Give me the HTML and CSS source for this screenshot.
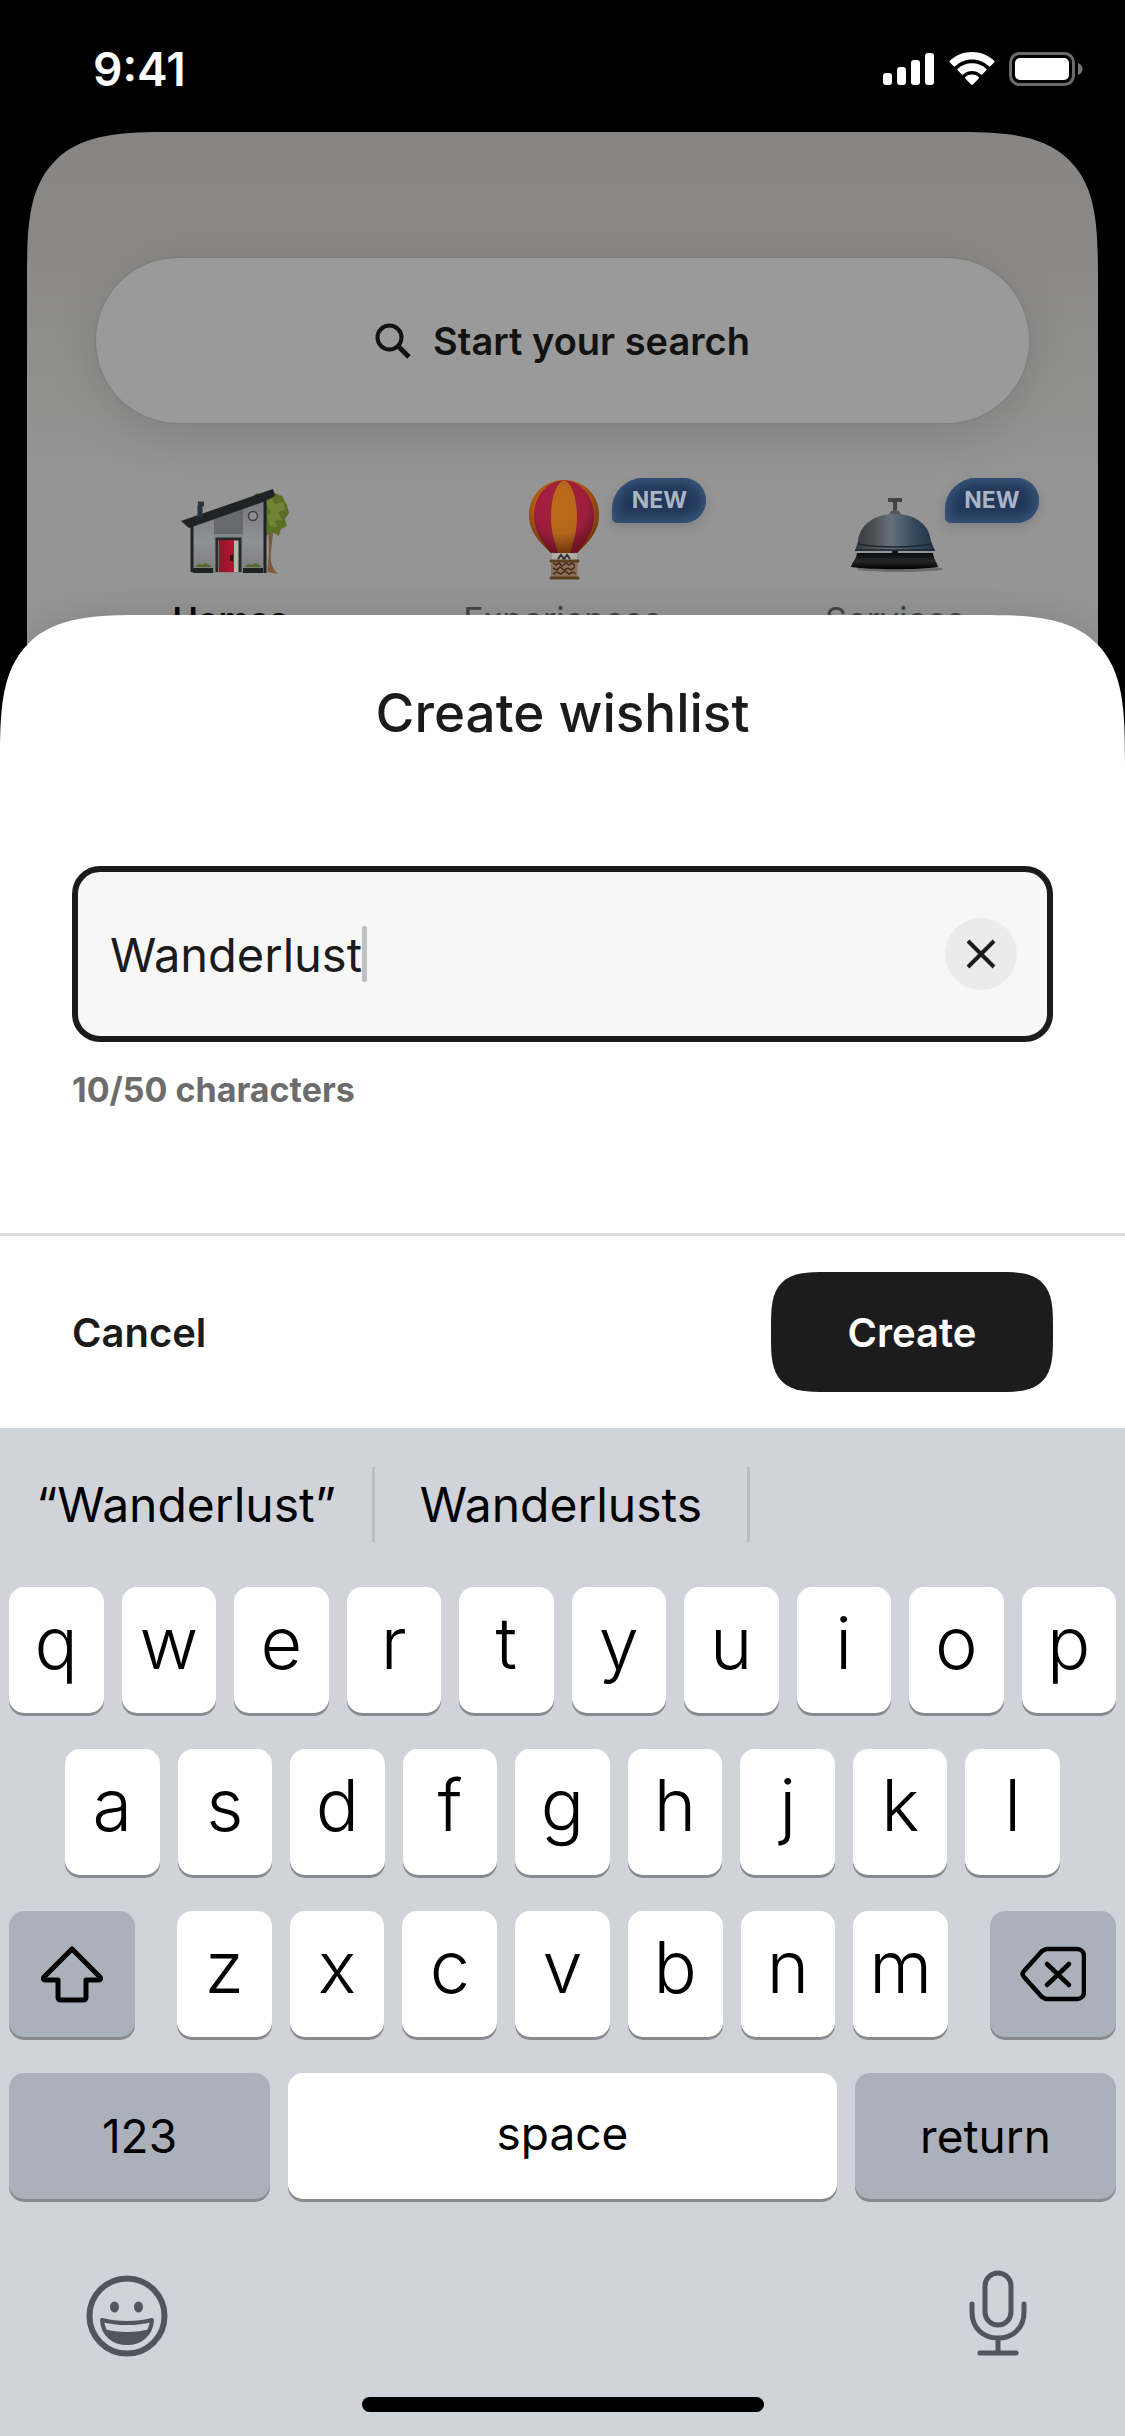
FILE: index.html
```html
<!DOCTYPE html>
<html lang="en">
<head>
<meta charset="utf-8">
<meta name="viewport" content="width=device-width, initial-scale=1">
<title>Create wishlist</title>
<link rel="stylesheet" href="styles.css">
</head>
<body>
<header class="status">
  <time class="status-time">9:41</time>
  <div class="status-icons">
    <svg width="52" height="34" viewBox="0 0 52 34" fill="#fff" aria-hidden="true"><rect x="0" y="21" width="9" height="12" rx="3"/><rect x="14" y="15" width="9" height="18" rx="3"/><rect x="28" y="8" width="9" height="25" rx="3"/><rect x="42" y="1" width="9" height="32" rx="3"/></svg>
    <svg width="46" height="34" viewBox="0 0 46 34" fill="#fff" aria-hidden="true"><path d="M23 0C31.500 0 39.300 3.200 45 8.600c.7.600.7 1.400.1 2l-3.500 3.500c-.6.600-1.400.6-2 0C35.200 10 29.400 7.500 23 7.500S10.800 10 6.400 14.100c-.6.600-1.400.6-2 0L.9 10.600c-.6-.6-.6-1.400.1-2C6.700 3.200 14.500 0 23 0z"/><path d="M23 11.200c5.400 0 10.300 2 14 5.400.7.600.7 1.400.1 2l-3.600 3.600c-.6.600-1.300.6-2 .1-2.300-2-5.300-3.200-8.500-3.200s-6.200 1.200-8.500 3.200c-.7.500-1.400.5-2-.1l-3.600-3.600c-.6-.6-.6-1.400.1-2 3.700-3.400 8.600-5.400 14-5.400z"/><path d="M23 22.600c2.500 0 4.700.8 6.400 2.200.6.500.6 1.300.1 1.900l-5.600 5.700c-.5.500-1.300.5-1.800 0l-5.600-5.700c-.5-.6-.5-1.400.1-1.900 1.700-1.400 3.900-2.200 6.400-2.200z"/></svg>
    <svg width="74" height="34" viewBox="0 0 74 34" aria-hidden="true"><rect x="1.500" y="1.500" width="63" height="31" rx="9" fill="none" stroke="#6a6a6a" stroke-width="3"/><rect x="6" y="6" width="54" height="22" rx="5" fill="#fff"/><path d="M69 11c3 1 4.500 3.500 4.500 6S72 22 69 23z" fill="#757575"/></svg>
  </div>
</header>

<section class="explore">
  <button class="search" type="button">
    <svg width="36" height="36" viewBox="0 0 36 36" fill="none" stroke="#121212" stroke-width="4" aria-hidden="true"><circle cx="14.500" cy="14.500" r="12"/><path d="M23 23l11 11" stroke-width="5"/></svg>
    Start your search
  </button>
  <nav class="tabs">
    <a class="tab tab-current" href="#homes">
      <svg class="tab-art" width="112" height="104" viewBox="-7 -1 112 104" overflow="visible" aria-hidden="true">
        <defs>
          <linearGradient id="wall" x1="0" y1="0" x2="0" y2="1"><stop offset="0" stop-color="#77777a"/><stop offset=".6" stop-color="#909194"/><stop offset="1" stop-color="#7c7c7e"/></linearGradient>
          <linearGradient id="door" x1="0" y1="0" x2="1" y2="0"><stop offset="0" stop-color="#96142c"/><stop offset="1" stop-color="#b2152f"/></linearGradient>
        </defs>
        <path d="M86 45c3 18 2 36 0 48l11 2c-6-6-8-12-7-22l3-28z" fill="#7c5b3a"/>
        <path d="M70 18l6-4 8 3 8-4 9 4 5 9 2 8-4 6 2 7-6 3-2 7-7-4-7 5-3-8z" fill="#5c6f27"/>
        <path d="M84 22l7-2 3 5 8-2 2 8-7 2 4 8-7 1 2 6-7-1-3-10 4-3z" fill="#708535"/>
        <path d="M11 44L84 17v77H11z" fill="url(#wall)"/>
        <path d="M33 38l29-12v68H33z" fill="#68696c"/><path d="M33 55h29v39H33z" fill="#848588"/>
        <path d="M11 46v47M84 20v74" stroke="#202326" stroke-width="3"/>
        <path d="M0 42L92 10l2 7-12 6L8 49z" fill="#1f2324"/>
        <path d="M19 38V26M17 25h6" stroke="#27363a" stroke-width="5"/>
        <circle cx="72" cy="37" r="4.500" fill="#8f8f91" stroke="#3e4042" stroke-width="1.500"/>
        <path d="M36 93V60h23v33" fill="#b9b7ad" stroke="#27292a" stroke-width="3"/>
        <path d="M38 61h15v32H38z" fill="url(#door)"/><path d="M49 76h3v6h-3z" fill="#2c1218"/>
        <path d="M12 89h20v5H12zM62 89h20v5H62z" fill="#202420"/><path d="M14 88l3-3 4 1 4-2 6 4zM64 88l3-3 4 1 4-2 6 4z" fill="#526a2b"/>
      </svg>
      <span>Homes</span>
    </a>
    <a class="tab" href="#experiences">
      <svg class="tab-art" width="112" height="104" viewBox="-2 -1 112 104" aria-hidden="true">
        <defs><radialGradient id="shade" cx=".45" cy=".35" r=".65"><stop offset="0" stop-color="#000" stop-opacity="0"/><stop offset=".6" stop-color="#000" stop-opacity=".05"/><stop offset="1" stop-color="#300" stop-opacity=".5"/></radialGradient></defs>
        <path d="M56 1c20 0 35 15 35 35 0 15-8 25-22 38H43C29 61 21 51 21 36 21 16 36 1 56 1z" fill="#b65f16"/>
        <path d="M56 1C37 3 26 19 26 37c0 15 8 25 17 37h26c9-12 17-22 17-37C86 19 75 3 56 1z" fill="#a5203f"/>
        <path d="M56 1c-8 3-13 18-13 37 0 15 4 26 7 36h12c3-10 7-21 7-36C69 19 64 4 56 1z" fill="#bd6b1a"/>
        <path d="M56 1c20 0 35 15 35 35 0 15-8 25-22 38H43C29 61 21 51 21 36 21 16 36 1 56 1z" fill="url(#shade)"/>
        <path d="M44 74h25v9H44z" fill="#b0aba4"/><path d="M50 80l3-4 3 4 3-4 3 4" stroke="#343038" stroke-width="2" fill="none"/>
        <path d="M43 81h27l-1 18H43z" fill="#8c7056"/>
        <path d="M45 84l3 2 3-2 3 3 4-3 3 2 3-2 3 3M45 89l4 2 3-3 4 3 4-2 3 2 4-3M45 95l4-2 4 2 4-3 4 3 4-2 3 2" stroke="#402b20" stroke-width="1.500" fill="none"/>
        <path d="M43 82h27M43 99h27" stroke="#59401e" stroke-width="3" stroke-linecap="round"/>
      </svg>
      <span>Experiences</span>
      <strong class="badge">NEW</strong>
    </a>
    <a class="tab" href="#services">
      <svg class="tab-art" width="112" height="104" viewBox="1 -1 112 104" aria-hidden="true">
        <defs>
          <linearGradient id="dome" x1="0" y1="0" x2="1" y2="0"><stop offset="0" stop-color="#343b42"/><stop offset=".2" stop-color="#4a4b4c"/><stop offset=".45" stop-color="#65717b"/><stop offset=".75" stop-color="#34495d"/><stop offset="1" stop-color="#233140"/></linearGradient>
          <linearGradient id="base" x1="0" y1="0" x2="0" y2="1"><stop offset="0" stop-color="#08090a"/><stop offset=".5" stop-color="#27282a"/><stop offset="1" stop-color="#000"/></linearGradient>
        </defs>
        <ellipse cx="62" cy="90" rx="43" ry="3" fill="#6d6d6d"/>
        <path d="M50 21h14M57 22v10" stroke="#424548" stroke-width="4"/><path d="M51 37c0-8 12-8 12 0z" fill="#54585c"/>
        <path d="M20 62c2-17 17-27 37-27s34 10 36 27l4 10H17z" fill="url(#dome)"/>
        <path d="M20 65c20 4 52 4 73 0M17 71h80" stroke="#1d2731" stroke-width="1.500" fill="none"/>
        <path d="M19 74h76c1 7 4 9 5 14-20 3-67 3-87 0 1-5 5-7 6-14z" fill="url(#base)"/><path d="M54 72h6v3h-6z" fill="#101214"/>
      </svg>
      <span>Services</span>
      <strong class="badge">NEW</strong>
    </a>
  </nav>
</section>

<main class="sheet">
  <h1 class="sheet-title">Create wishlist</h1>
  <form class="form">
    <div class="fields">
      <div class="field">
        <input class="field-input" type="text" value="Wanderlust" maxlength="50" size="9" aria-label="Wishlist name" aria-describedby="count">
        <span class="caret"></span>
        <button class="clear" type="button" aria-label="Clear text"><svg width="32" height="32" viewBox="0 0 32 32" fill="none" stroke="#1b1b1b" stroke-width="4" aria-hidden="true"><path d="M3 3l26 26M29 3L3 29"/></svg></button>
      </div>
      <p class="count" id="count">10/50 characters</p>
    </div>
    <div class="actions">
      <button class="cancel" type="button">Cancel</button>
      <button class="create" type="submit">Create</button>
    </div>
  </form>
</main>

<section class="keyboard" aria-label="Keyboard">
  <div class="suggestions">
    <button type="button" class="suggestion">“Wanderlust”</button>
    <button type="button" class="suggestion">Wanderlusts</button>
    <span class="suggestion"></span>
  </div>
  <div class="keys">
    <div class="row">
      <button class="key">q</button><button class="key">w</button><button class="key">e</button><button class="key">r</button><button class="key">t</button><button class="key">y</button><button class="key">u</button><button class="key">i</button><button class="key">o</button><button class="key">p</button>
    </div>
    <div class="row row-home">
      <button class="key">a</button><button class="key">s</button><button class="key">d</button><button class="key">f</button><button class="key">g</button><button class="key">h</button><button class="key">j</button><button class="key">k</button><button class="key">l</button>
    </div>
    <div class="row row-shift">
      <button class="key key-dark" aria-label="Shift"><svg width="64" height="58" viewBox="0 0 64 58" fill="none" stroke="#000" stroke-width="5" stroke-linejoin="round" aria-hidden="true"><path d="M32 4L60 32c1 1 1 3-1 3H46v17c0 2-1 3-3 3H21c-2 0-3-1-3-3V35H5c-2 0-2-2-1-3z"/></svg></button>
      <div class="row row-letters"><button class="key">z</button><button class="key">x</button><button class="key">c</button><button class="key">v</button><button class="key">b</button><button class="key">n</button><button class="key">m</button></div>
      <button class="key key-dark" aria-label="Delete"><svg width="66" height="56" viewBox="0 0 66 56" fill="none" stroke="#000" stroke-width="4.500" stroke-linecap="round" stroke-linejoin="round" aria-hidden="true"><path d="M27 3h30c4 0 7 3 7 7v36c0 4-3 7-7 7H27c-2 0-3-1-5-2L4 31c-2-2-2-4 0-6L22 5c2-1 3-2 5-2z"/><path d="M27 18l22 21M49 18L27 39"/></svg></button>
    </div>
    <div class="row row-space">
      <button class="key key-dark key-word">123</button>
      <button class="key key-word">space</button>
      <button class="key key-dark key-word">return</button>
    </div>
  </div>
  <div class="tools">
    <button class="tool" aria-label="Emoji"><svg width="82" height="88" viewBox="0 0 82 88" fill="none" stroke="#50555e" aria-hidden="true"><circle cx="41" cy="47" r="37.500" stroke-width="6"/><ellipse cx="28.500" cy="38" rx="4.500" ry="5.500" fill="#50555e" stroke="none"/><ellipse cx="52.500" cy="38" rx="4.500" ry="5.500" fill="#50555e" stroke="none"/><path d="M16 51c15 4 35 4 50 0-1 15-12 23-25 23S17 66 16 51z" stroke-width="4" stroke-linejoin="round"/><path d="M18 60c14 4 32 4 46 0-3 10-12 14-23 14s-20-4-23-14z" fill="#50555e" stroke="none"/></svg></button>
    <button class="tool" aria-label="Dictate"><svg width="58" height="88" viewBox="0 0 58 88" fill="none" stroke="#50555e" stroke-width="5" stroke-linecap="round" aria-hidden="true"><rect x="16" y="4" width="26" height="52" rx="13"/><path d="M3 35v8c0 16 11 26 26 26s26-10 26-26v-8M29 69v14"/><path d="M11 84h36"/></svg></button>
  </div>
  <div class="home-bar"></div>
</section>
</body>
</html>
```
FILE: styles.css
```css
* {
  box-sizing: border-box;
}

body {
  margin: 0;
  background: #000;
  color: #1b1b1b;
  font-family: Inter, "Liberation Sans", sans-serif;
  font-size: 40px;
}

button {
  margin: 0;
  padding: 0;
  border: 0;
  background: none;
  color: inherit;
  font: inherit;
}

svg {
  display: block;
  flex: none;
}

.status {
  display: flex;
  align-items: center;
  justify-content: space-between;
  height: 132px;
  padding: 6px 42px 0 93px;
  color: #fff;
}

.status-time {
  font-size: 46px;
  font-weight: 600;
}

.status-icons {
  display: flex;
  gap: 14px;
}

.explore {
  margin: 0 27px;
  padding: 126px 37px 120px;
  border-radius: 100px 100px 0 0;
  background: linear-gradient(#868583, #8a8986 126px, #959595 340px, #959595);
}

.search {
  display: flex;
  align-items: center;
  justify-content: center;
  gap: 22px;
  width: calc(100% - 64px);
  height: 165px;
  margin: 0 32px;
  border-radius: 82px;
  background: #9a9a9a;
  box-shadow: 0 12px 48px rgba(0, 0, 0, .13), 0 0 2px rgba(0, 0, 0, .2);
  color: #121212;
  font-size: 38px;
  font-weight: 600;
}

.tabs {
  display: grid;
  grid-template-columns: repeat(3, 1fr);
  margin-top: 55px;
}

.tab {
  position: relative;
  display: flex;
  flex-direction: column;
  align-items: center;
  gap: 16px;
  color: #454545;
  font-size: 34px;
  line-height: 44px;
  text-decoration: none;
}

.tab-current {
  color: #0b0b0b;
  font-weight: 600;
}

.badge {
  position: absolute;
  top: 0;
  left: calc(50% + 50px);
  width: 94px;
  height: 45px;
  border-radius: 32px 23px 23px 6px;
  background: #23385b;
  box-shadow: inset 0 0 12px 4px #39577b, 0 4px 12px rgba(0, 0, 0, .15);
  color: #a9b4c4;
  font-size: 23px;
  font-weight: 700;
  line-height: 45px;
  text-align: center;
}

.sheet {
  position: relative;
  margin-top: -147px;
  border-radius: 100px 100px 0 0;
  background: #fff;
  box-shadow: 0 0 32px rgba(0, 0, 0, .12);
}

.sheet-title {
  margin: 0;
  padding: 64px 72px 0;
  font-size: 53px;
  font-weight: 500;
  line-height: 68px;
  text-align: center;
}

.fields {
  padding: 119px 72px;
}

.field {
  display: flex;
  align-items: center;
  height: 176px;
  padding: 0 30px 0 32px;
  border: 6px solid #1b1b1b;
  border-radius: 28px;
  background: #f7f7f7;
}

.field-input {
  field-sizing: content;
  min-width: 0;
  padding: 0;
  border: 0;
  outline: 0;
  background: none;
  color: inherit;
  font: inherit;
  font-size: 47px;
}

.caret {
  width: 5px;
  height: 56px;
  border-radius: 2px;
  background: #c1c1c1;
}

.clear {
  display: grid;
  place-items: center;
  width: 72px;
  height: 72px;
  margin-left: auto;
  border-radius: 50%;
  background: #ebebeb;
}

.count {
  margin: 26px 0 0;
  padding-bottom: 2px;
  color: #6c6c6c;
  font-size: 34px;
  font-weight: 700;
  line-height: 44px;
}

.actions {
  display: flex;
  align-items: center;
  justify-content: space-between;
  padding: 36px 72px;
  border-top: 3px solid #ddd;
  font-weight: 600;
}

.create {
  width: 282px;
  height: 120px;
  border-radius: 40px;
  background: #1c1c1c;
  color: #fff;
}

@supports (corner-shape: superellipse(1.7)) {
  .explore,
  .sheet {
    border-radius: 148px 148px 0 0;
    corner-shape: superellipse(1.7);
  }

  .create {
    border-radius: 56px;
    corner-shape: superellipse(1.7);
  }
}

.keyboard {
  position: relative;
  padding-bottom: 24px;
  background: #d1d3db;
  color: #000;
}

.suggestions {
  display: grid;
  grid-template-columns: repeat(3, 1fr);
  padding: 39px 0 45px;
}

.suggestion {
  height: 75px;
  border-right: 3px solid #bbbdc5;
  font-size: 48px;
}

.suggestion:last-child {
  border: 0;
}

.keys {
  display: grid;
  gap: 36px;
  padding: 0 9px;
}

.row {
  display: grid;
  grid-template-columns: repeat(10, 1fr);
  gap: 18px;
}

.row-home {
  grid-template-columns: repeat(9, 1fr);
  padding: 0 56px;
}

.row-shift {
  grid-template-columns: 126px 1fr 126px;
  gap: 42px;
}

.row-letters {
  grid-template-columns: repeat(7, 1fr);
}

.row-space {
  grid-template-columns: 261px 1fr 261px;
}

.key {
  display: flex;
  align-items: center;
  justify-content: center;
  height: 126px;
  padding-bottom: 14px;
  border-radius: 15px;
  background: #fff;
  box-shadow: 0 3px 0 #898a8d;
  font-size: 72px;
  font-weight: 300;
  line-height: 88px;
}

.key-word {
  padding-bottom: 6px;
  font-size: 46px;
  font-weight: 400;
}

.key-dark {
  padding: 0;
  background: #abb1bb;
}

.tools {
  display: flex;
  justify-content: space-between;
  padding: 70px 98px 0 86px;
}

.home-bar {
  width: 402px;
  height: 15px;
  margin: 40px auto 0;
  border-radius: 8px;
  background: #000;
}
```
